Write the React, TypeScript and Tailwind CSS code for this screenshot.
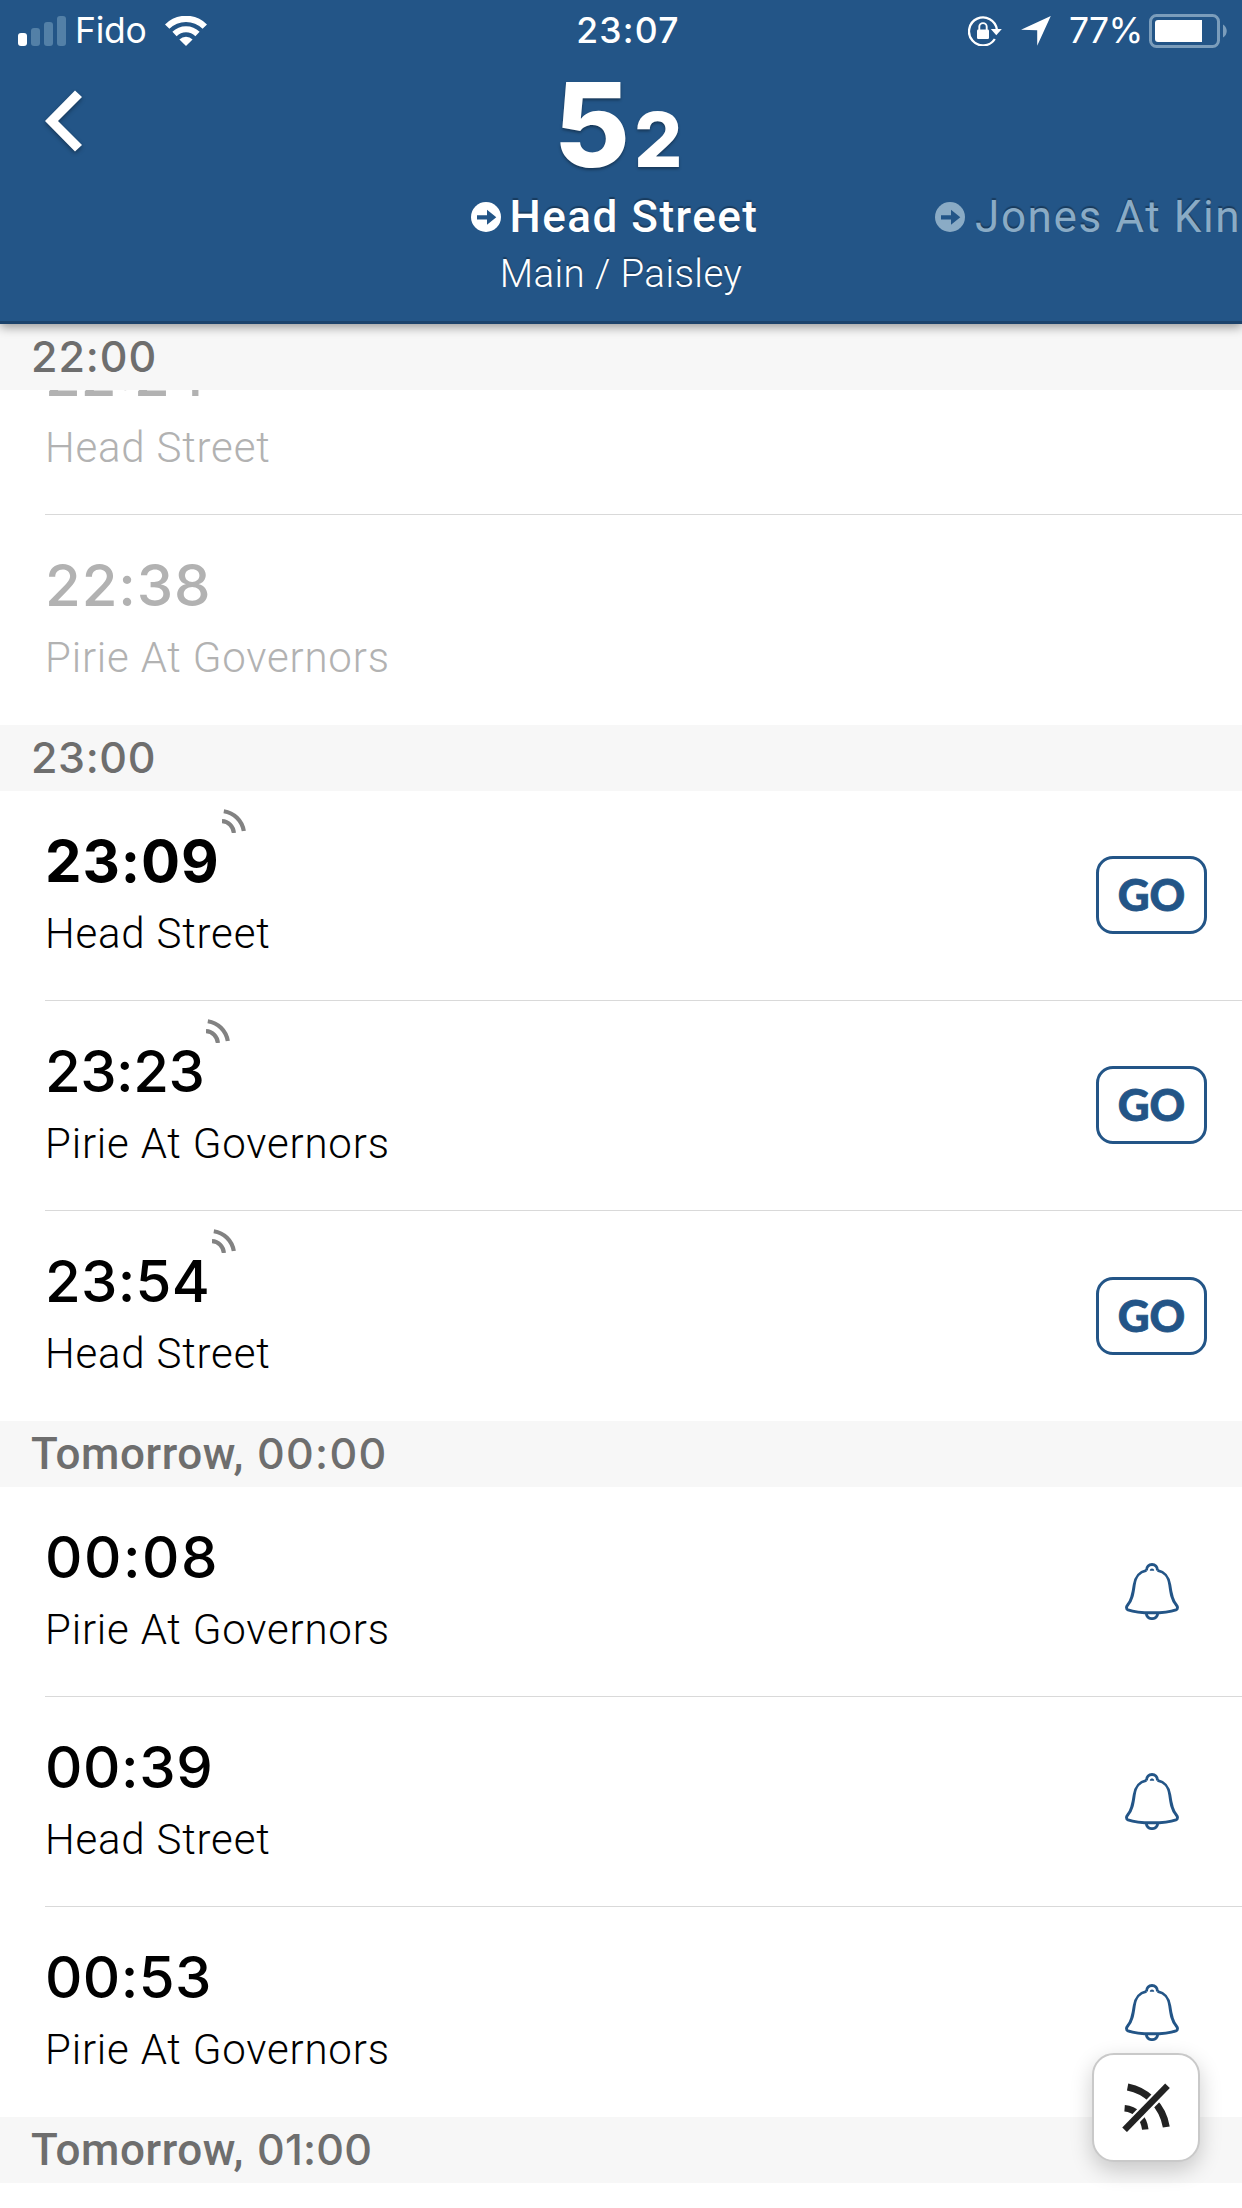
type Status = "past" | "live" | "scheduled";
type Departure = { time: string; stop: string; status: Status; next?: boolean; tracking: string };
type Group = { label?: string; hour: string; tracking: string; rows: Departure[] };

const inter = "font-['Inter',sans-serif]";
const roboto = "font-['Roboto',sans-serif]";

const groups: Group[] = [
  {
    hour: "22:00",
    tracking: "tracking-[0.9px]",
    rows: [
      { time: "22:24", stop: "Head Street", status: "past", tracking: "tracking-[0px]" },
      { time: "22:38", stop: "Pirie At Governors", status: "past", tracking: "tracking-[0.9px]" },
    ],
  },
  {
    hour: "23:00",
    tracking: "tracking-[0.6px]",
    rows: [
      { time: "23:09", stop: "Head Street", status: "live", next: true, tracking: "tracking-[0.9px]" },
      { time: "23:23", stop: "Pirie At Governors", status: "live", tracking: "tracking-[-0.5px]" },
      { time: "23:54", stop: "Head Street", status: "live", tracking: "tracking-[0.3px]" },
    ],
  },
  {
    label: "Tomorrow,",
    hour: "00:00",
    tracking: "tracking-[1.3px]",
    rows: [
      { time: "00:08", stop: "Pirie At Governors", status: "scheduled", tracking: "tracking-[1.5px]" },
      { time: "00:39", stop: "Head Street", status: "scheduled", tracking: "tracking-[0.6px]" },
      { time: "00:53", stop: "Pirie At Governors", status: "scheduled", tracking: "tracking-[0.4px]" },
    ],
  },
  { label: "Tomorrow,", hour: "01:00", tracking: "tracking-[0.2px]", rows: [] },
];

function SignalBars() {
  return (
    <div className="flex h-[30px] items-end gap-1">
      <div className="h-[13px] w-[9px] rounded-[3px] bg-white" />
      <div className="h-[18px] w-[9px] rounded-[3px] bg-[#5380a7]" />
      <div className="h-[24px] w-[9px] rounded-[3px] bg-[#5380a7]" />
      <div className="h-[30px] w-[9px] rounded-[3px] bg-[#5380a7]" />
    </div>
  );
}

function WifiIcon() {
  return (
    <svg width="42" height="30" viewBox="0 0 42 30" fill="none" stroke="#fff">
      <path d="M2.2 10.6a26.6 26.6 0 0 1 37.6 0" strokeWidth="6.2" />
      <path d="M9.5 18a16.3 16.3 0 0 1 23 0" strokeWidth="6" />
      <path d="M21 30l-6.6-6.6a9.4 9.4 0 0 1 13.2 0z" fill="#fff" stroke="none" />
    </svg>
  );
}

function RotationLockIcon() {
  return (
    <svg width="34" height="30" viewBox="0 0 34 30" fill="none">
      <path d="M28.9 13.5A14 14 0 1 0 26.8 23" stroke="#fff" strokeWidth="2.3" />
      <path d="M22.8 13h11l-5.5 6.3z" fill="#fff" />
      <rect x="9" y="13.6" width="12" height="9.4" rx="1.2" fill="#fff" />
      <path d="M11.3 14v-3.2a3.7 3.7 0 0 1 7.4 0V14" stroke="#fff" strokeWidth="1.9" />
    </svg>
  );
}

function LocationIcon() {
  return (
    <svg width="30" height="30" viewBox="0 0 30 30" fill="#fff">
      <path d="M29.8 0L16.2 29.8V14.2L0 13.8z" />
    </svg>
  );
}

function BatteryIcon() {
  return (
    <svg width="79" height="34" viewBox="0 0 79 34">
      <rect x="1.5" y="1.5" width="68" height="31" rx="6" fill="none" stroke="#7b9dbb" strokeWidth="3" />
      <path d="M9 6h44v22H9a3 3 0 0 1-3-3V9a3 3 0 0 1 3-3z" fill="#fff" />
      <path d="M74 10.5c5 3 5 10 0 13z" fill="#7b9dbb" />
    </svg>
  );
}

function BackIcon() {
  return (
    <svg width="37" height="62" viewBox="0 0 37 62" fill="#fff" className="drop-shadow-[0_2px_2px_rgba(0,0,0,0.35)]">
      <path d="M0 31L30 .5l7 6.5-24 24 24 24-7 6.5z" />
    </svg>
  );
}

function DirectionIcon({ className }: { className: string }) {
  return (
    <svg width="30" height="30" viewBox="0 0 30 30" className={className}>
      <circle cx="15" cy="15" r="15" fill="currentColor" />
      <path d="M6 13.2h10V7.8l9.3 7.5-9.3 7.5v-5.4H6z" fill="#235587" />
    </svg>
  );
}

function LiveIcon() {
  return (
    <svg width="24" height="24" viewBox="0 0 24 24" fill="none" stroke="#828282" strokeWidth="4.2" className="ml-[2px] mt-[-23px]">
      <path d="M1.8 2.2C12 3.8 20 11.5 21.8 22" />
      <path d="M0 12.2c6.5.3 11.3 5 11.9 11.8" />
    </svg>
  );
}

function BellIcon() {
  return (
    <svg width="54" height="57" viewBox="0 0 54 57" fill="none" stroke="#235587" strokeWidth="2.9" strokeLinejoin="round" className="mr-[28px]">
      <path d="M21.5 7.3C14 9 10.5 13 9.2 22 8 31 7 37 3 41.5 1 44 1 46 3 46.8 9 49 18 49.8 27 49.8s18-.8 24-3c2-.8 2-2.8 0-5.3-4-4.5-5-10.5-6.2-19.5C43.500 13 40 9 32.500 7.300" />
      <path d="M21.5 7.6c0-4 2.5-6.1 5.5-6.1s5.5 2.1 5.5 6.1M21.3 50c0 3.4 2.5 5.6 5.7 5.6s5.7-2.2 5.7-5.6" />
      <path d="M24.8 7.8c0-3.2 4.4-3.2 4.4 0z" fill="#235587" stroke="none" />
    </svg>
  );
}

function LiveOffIcon() {
  return (
    <svg width="48" height="49" viewBox="0 0 48 49" fill="none">
      <path d="M5.6 4C24 7.5 40.5 22 44.3 44" stroke="#222" strokeWidth="7" />
      <path d="M2.6 25.2C13.5 26 22 34.5 23.3 46.5" stroke="#222" strokeWidth="6.5" />
      <path d="M0 49.5L48 .4" stroke="#fff" strokeWidth="11" />
      <path d="M2.6 46.8L45.5 2.8" stroke="#222" strokeWidth="6.5" />
    </svg>
  );
}

function GroupHeader({ label, hour, tracking }: { label?: string; hour: string; tracking: string }) {
  return (
    <div className="flex h-[66px] items-baseline bg-[#f7f7f7] pl-[31px] leading-[65px] text-[#6e6e6e]">
      {label && <span className={`${roboto} w-[226px] text-[44px] font-medium tracking-[0.6px]`}>{label}</span>}
      <span className={`${inter} text-[43px] font-medium ${tracking}`}>{hour}</span>
    </div>
  );
}

function DepartureRow({ row, last }: { row: Departure; last: boolean }) {
  return (
    <div className="ml-[45px] h-[210px] shrink-0">
      <div className={`flex h-full items-center justify-between pr-[35px] ${last ? "" : "border-b border-[#d9d9d9]"}`}>
        <div className={`h-full pt-[41px] ${row.status === "past" ? "text-[#b2b2b2]" : "text-black"}`}>
          <div className="flex h-[58px] items-start">
            <span className={`${inter} text-[58px] leading-[58px] ${row.next ? "font-bold" : "font-medium"} ${row.tracking}`}>{row.time}</span>
            {row.status === "live" && <LiveIcon />}
          </div>
          <div className={`${roboto} mt-[23px] text-[42px] font-light leading-[42px] tracking-[0.8px]`}>{row.stop}</div>
        </div>
        {row.status === "live" && (
          <div className="mb-px flex h-[78px] w-[111px] items-center justify-center rounded-[17px] border-[3px] border-[#235587] pb-[2px] font-['Lato',sans-serif] text-[44px] font-black leading-none text-[#235587] [-webkit-text-stroke:0.8px_#235587]">
            GO
          </div>
        )}
        {row.status === "scheduled" && <BellIcon />}
      </div>
    </div>
  );
}

export default function App() {
  return (
    <div className="relative flex h-[2208px] w-[1242px] flex-col overflow-hidden bg-white">
      <header className="relative z-10 flex h-[324px] shrink-0 flex-col border-b-[3px] border-[#1b426b] bg-[#235587] text-white shadow-[0_3px_10px_rgba(0,0,0,0.4)]">
        <div className={`${inter} grid h-[60px] grid-cols-3 items-center text-[35.5px] leading-[62px]`}>
          <div className="flex items-center pl-[18px]">
            <SignalBars />
            <span className="ml-[9px] w-[90px] tracking-[-0.3px]">Fido</span>
            <WifiIcon />
          </div>
          <div className="pl-[14px] text-center font-medium tracking-[1.2px]">23:07</div>
          <div className="flex items-center justify-end pr-[14px]">
            <RotationLockIcon />
            <span className="ml-[19px]">
              <LocationIcon />
            </span>
            <span className="ml-[18px] w-[80px] tracking-[-0.7px]">77%</span>
            <BatteryIcon />
          </div>
        </div>
        <div className="grid grow grid-cols-3">
          <div className="pl-[45px] pt-[30px]">
            <BackIcon />
          </div>
          <div className="flex flex-col items-center [text-shadow:0_2px_3px_rgba(0,0,0,0.35)]">
            <div className={`${inter} mr-[6px] flex h-[116px] items-baseline font-extrabold leading-[129px]`}>
              <span className="text-[117px]">5</span>
              <span className="ml-[4px] text-[76px]">2</span>
            </div>
            <div className="mr-[13px] mt-[14px] flex items-center [text-shadow:0_-2px_1px_rgba(0,0,0,0.3)]">
              <DirectionIcon className="mt-px text-white" />
              <span className={`${roboto} ml-[9px] mt-px text-[44px] font-medium leading-[52px] tracking-[1.5px]`}>Head Street</span>
            </div>
            <div className={`${roboto} mt-[8px] text-[38.5px] font-light leading-[46px] tracking-[0.4px] [text-shadow:0_-2px_1px_rgba(0,0,0,0.3)]`}>
              Main / Paisley
            </div>
          </div>
          <div className="overflow-hidden pl-[107px] pt-[130px] text-[#8aabc5]">
            <div className="flex items-center [text-shadow:0_-2px_1px_rgba(0,0,0,0.3)]">
              <DirectionIcon className="mt-px shrink-0" />
              <span className={`${roboto} ml-[10px] mt-px whitespace-nowrap text-[44px] leading-[52px] tracking-[1.6px]`}>Jones At Kin</span>
            </div>
          </div>
        </div>
      </header>
      <main>
        {groups.map((g, gi) => (
          <section key={g.hour}>
            <GroupHeader label={g.label} hour={g.hour} tracking={g.tracking} />
            <div className={gi === 0 ? "flex h-[335px] flex-col justify-end overflow-hidden" : ""}>
              {g.rows.map((r, i) => (
                <DepartureRow key={r.time} row={r} last={i === g.rows.length - 1} />
              ))}
            </div>
          </section>
        ))}
      </main>
      <button className="absolute left-[1092px] top-[2053px] flex h-[109px] w-[108px] items-center justify-center rounded-[22px] border-2 border-[#c9c9c9] bg-white shadow-[0_8px_22px_rgba(0,0,0,0.2)]">
        <LiveOffIcon />
      </button>
    </div>
  );
}
